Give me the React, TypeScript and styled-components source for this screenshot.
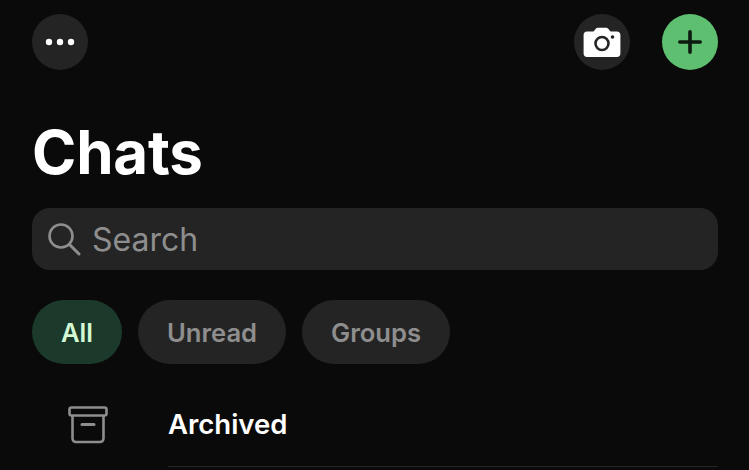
import React from 'react';
import styled, { createGlobalStyle } from 'styled-components';

const GlobalStyle = createGlobalStyle`
  html, body {
    margin: 0;
    padding: 0;
    background: #0a0a0a;
  }
  body {
    font-family: Inter, "Liberation Sans", sans-serif;
    overflow: hidden;
  }
`;

const Screen = styled.div`
  width: 749px;
  height: 470px;
  box-sizing: border-box;
  padding: 14px 31px 0 32px;
  background: #0a0a0a;
  overflow: hidden;
`;

const TopBar = styled.div`
  display: flex;
  align-items: center;
  justify-content: space-between;
`;

const TopActions = styled.div`
  display: flex;
  gap: 32px;
`;

const RoundButton = styled.button<{ $accent?: boolean }>`
  display: flex;
  align-items: center;
  justify-content: center;
  width: 56px;
  height: 56px;
  padding: 0;
  border: none;
  border-radius: 50%;
  background: ${(p) => (p.$accent ? '#5dbf6f' : '#242424')};
`;

const Title = styled.h1`
  margin: 47px 0 0 0;
  font-size: 60px;
  line-height: 70px;
  font-weight: 700;
  color: #fff;
  letter-spacing: -0.2px;
`;

const SearchBar = styled.div`
  display: flex;
  align-items: center;
  gap: 11px;
  height: 62px;
  margin-top: 21px;
  padding-left: 15px;
  border-radius: 18px;
  background: #242424;
  font-size: 32px;
  color: #8e8e8e;
`;

const Chips = styled.div`
  display: flex;
  gap: 16px;
  margin-top: 30px;
`;

const Chip = styled.div<{ $active?: boolean }>`
  display: flex;
  align-items: center;
  justify-content: center;
  height: 64px;
  width: ${(p) => (p.$active ? '90px' : '148px')};
  border-radius: 32px;
  background: ${(p) => (p.$active ? '#1c3a2b' : '#242424')};
  color: ${(p) => (p.$active ? '#d3f8d3' : '#8e8e8e')};
  font-size: 25.6px;
  font-weight: 600;
`;

const ArchivedRow = styled.div`
  display: flex;
  align-items: center;
  height: 103px;
  padding-top: 18px;
  box-sizing: border-box;
`;

const ArchivedIcon = styled.div`
  display: flex;
  justify-content: center;
  width: 112px;
  box-sizing: border-box;
`;

const ArchivedBody = styled.div`
  flex: 1;
  height: 100%;
  margin-left: 24px;
  display: flex;
  align-items: center;
  border-bottom: 1px solid #262626;
  color: #fff;
  font-size: 27.5px;
  font-weight: 600;
  box-sizing: border-box;
`;

const App = () => (
  <Screen>
    <GlobalStyle />
    <TopBar>
      <RoundButton>
        <svg width="30" height="8" viewBox="0 0 30 8">
          <circle cx="4" cy="4" r="3.2" fill="#fff" />
          <circle cx="15" cy="4" r="3.2" fill="#fff" />
          <circle cx="26" cy="4" r="3.2" fill="#fff" />
        </svg>
      </RoundButton>
      <TopActions>
        <RoundButton>
          <svg width="38" height="30" viewBox="0 0 38 30">
            <path
              d="M4 4.5h6.5L13 1.5c.5-.6 1-.8 1.8-.8h8.4c.8 0 1.3.2 1.8.8l2.5 3H34c2 0 3.400 1.400 3.400 3.400v18.700c0 2-1.400 3.400-3.400 3.400H4c-2 0-3.400-1.400-3.400-3.400V7.900C.6 5.900 2 4.500 4 4.500z"
              fill="#fff"
            />
            <circle cx="19" cy="16.500" r="6.500" fill="none" stroke="#242424" strokeWidth="2.600" />
            <circle cx="29.500" cy="10" r="1.800" fill="#242424" />
          </svg>
        </RoundButton>
        <RoundButton $accent>
          <svg width="26" height="26" viewBox="0 0 26 26">
            <path d="M13 2.800v20.400M2.800 13h20.400" stroke="#0d1a10" strokeWidth="3.600" strokeLinecap="round" />
          </svg>
        </RoundButton>
      </TopActions>
    </TopBar>
    <Title>Chats</Title>
    <SearchBar>
      <svg width="34" height="34" viewBox="0 0 34 34">
        <circle cx="14" cy="14" r="11.500" fill="none" stroke="#8e8e8e" strokeWidth="2.600" />
        <path d="M22.500 22.500L32 32" stroke="#8e8e8e" strokeWidth="3" strokeLinecap="round" />
      </svg>
      Search
    </SearchBar>
    <Chips>
      <Chip $active>All</Chip>
      <Chip>Unread</Chip>
      <Chip>Groups</Chip>
    </Chips>
    <ArchivedRow>
      <ArchivedIcon>
        <svg width="40" height="38" viewBox="0 0 40 38">
          <rect x="1.500" y="1.500" width="37" height="8" rx="2" fill="none" stroke="#8e8e8e" strokeWidth="2.600" />
          <path
            d="M4.500 9.500v23c0 2 1.500 3.500 3.500 3.500h24c2 0 3.500-1.500 3.500-3.500v-23"
            fill="none"
            stroke="#8e8e8e"
            strokeWidth="2.600"
          />
          <path d="M14 18.500h12" stroke="#8e8e8e" strokeWidth="3" strokeLinecap="round" />
        </svg>
      </ArchivedIcon>
      <ArchivedBody>Archived</ArchivedBody>
    </ArchivedRow>
  </Screen>
);

export default App;
